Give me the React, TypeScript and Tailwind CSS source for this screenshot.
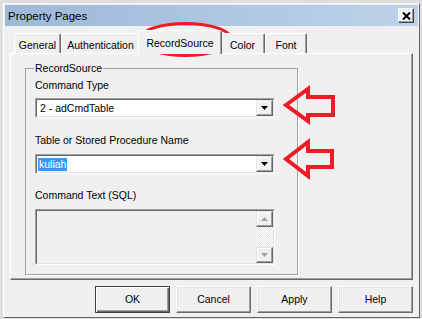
import type { ReactNode } from "react";

const FONT = { fontFamily: '"Liberation Sans", Arial, sans-serif' };

function Sunken({ className, children }: { className: string; children: ReactNode }) {
  return (
    <div className={`border border-t-[#a0a0a0] border-l-[#a0a0a0] border-r-white border-b-white ${className}`}>
      <div className="flex h-full w-full border border-t-[#696969] border-l-[#696969] border-r-[#e3e3e3] border-b-[#e3e3e3]">
        {children}
      </div>
    </div>
  );
}

function SmallButton({ children }: { children: ReactNode }) {
  return (
    <div className="flex h-[16px] w-[17px] items-center justify-center border border-t-[#e3e3e3] border-l-[#e3e3e3] border-r-[#696969] border-b-[#696969] bg-[#f0f0f0] shadow-[inset_-1px_-1px_0_#a0a0a0,inset_1px_1px_0_#ffffff]">
      {children}
    </div>
  );
}

function DownArrow({ color = "#000" }: { color?: string }) {
  return (
    <svg width="7" height="4" viewBox="0 0 7 4">
      <polygon points="0,0 7,0 3.5,4" fill={color} />
    </svg>
  );
}

function Combo({ children }: { children: ReactNode }) {
  return (
    <Sunken className="h-[20px] w-[240px] bg-white">
      <div className="flex flex-1 items-center pl-[1px] text-[10.5px] leading-[13px] text-black">{children}</div>
      <SmallButton>
        <DownArrow />
      </SmallButton>
    </Sunken>
  );
}

function Tab({ label, width, active }: { label: string; width: number; active?: boolean }) {
  return (
    <div
      style={{ width }}
      className={
        active
          ? "relative z-10 -mx-[2px] flex h-[24px] justify-center rounded-t-[2px] border-l border-t border-r border-l-white border-t-white border-r-[#696969] bg-[#f0f0f0] pt-[6px] text-[10.5px] leading-[13px] shadow-[inset_-1px_0_0_#a0a0a0]"
          : "mb-[1px] flex h-[20px] justify-center rounded-t-[2px] border-l border-t border-r border-l-white border-t-white border-r-[#696969] bg-[#f0f0f0] pt-[5px] text-[10.5px] leading-[13px] shadow-[inset_-1px_0_0_#a0a0a0]"
      }
    >
      {label}
    </div>
  );
}

function PushButton({ label, def }: { label: string; def?: boolean }) {
  return (
    <div
      className={`flex h-[27px] w-[75px] items-center justify-center border bg-[#f0f0f0] text-[10.5px] text-black ${
        def
          ? "border-[#404040] shadow-[inset_1px_1px_0_#ffffff,inset_-1px_-1px_0_#696969,inset_-2px_-2px_0_#a0a0a0]"
          : "border-t-white border-l-white border-r-[#696969] border-b-[#696969] shadow-[inset_-1px_-1px_0_#a0a0a0,inset_1px_1px_0_#e3e3e3]"
      }`}
    >
      {label}
    </div>
  );
}

export default function App() {
  return (
    <div style={FONT} className="relative h-[319px] w-[422px] overflow-hidden bg-[#dedede] pl-[3px] pt-[3px] text-black">
      <div className="flex h-[315px] w-[417px] flex-col border border-t-[#f4f4f4] border-l-white border-r-[#646464] border-b-[#646464] bg-[#f0f0f0]">
        {/* title bar */}
        <div className="mx-[1px] mt-[1px] flex h-[21px] items-center justify-between bg-gradient-to-r from-[#9db9d8] to-[#bcd3ea] pl-[3px] pr-[4px]">
          <span className="text-[11.5px] leading-[14px] text-black">Property Pages</span>
          <div className="flex h-[15px] w-[16px] items-center justify-center border border-t-white border-l-white border-r-[#404040] border-b-[#404040] bg-[#f0f0f0] shadow-[inset_-1px_-1px_0_#a0a0a0]">
            <svg width="9" height="8" viewBox="0 0 9 8">
              <path d="M1 0.5 L8 7.5 M8 0.5 L1 7.5" stroke="#000" strokeWidth="2" />
            </svg>
          </div>
        </div>

        {/* tabs */}
        <div className="relative z-10 ml-[10px] mt-[4px] flex h-[24px] items-end">
          <Tab label="General" width={47} />
          <Tab label="Authentication" width={79} />
          <Tab label="RecordSource" width={84} active />
          <Tab label="Color" width={45} />
          <Tab label="Font" width={42} />
        </div>

        {/* tab panel */}
        <div className="mx-[6px] -mt-[1px] flex h-[227px] flex-col border border-t-white border-l-white border-r-[#696969] border-b-[#696969] shadow-[inset_-1px_-1px_0_#a0a0a0] pl-[14px] pt-[8px]">
          <fieldset className="h-[213px] w-[273px] border border-[#a0a0a0] px-[9px] shadow-[1px_1px_0_#ffffff]">
            <legend className="ml-[-1px] px-[1px] text-[10.5px] leading-[13px]">RecordSource</legend>
            <div className="mt-[4px] text-[10.5px] leading-[13px]">Command Type</div>
            <div className="mt-[6px]">
              <Combo>
                <span className="pl-[2px]">2 - adCmdTable</span>
              </Combo>
            </div>
            <div className="mt-[16px] text-[10.5px] leading-[13px]">Table or Stored Procedure Name</div>
            <div className="mt-[7px]">
              <Combo>
                <span className="bg-[#3399ff] px-[1px] text-white">kuliah</span>
              </Combo>
            </div>
            <div className="mt-[15px] text-[10.5px] leading-[13px]">Command Text (SQL)</div>
            <div className="mt-[7px]">
              <Sunken className="h-[56px] w-[240px] bg-[#f0f0f0]">
                <div className="flex-1" />
                <div className="flex w-[17px] flex-col">
                  <SmallButton>
                    <svg width="7" height="4" viewBox="0 0 7 4">
                      <polygon points="0,4 7,4 3.5,0" fill="#a0a0a0" />
                    </svg>
                  </SmallButton>
                  <div className="flex-1 bg-[repeating-conic-gradient(#ffffff_0_25%,#e6e6e6_0_50%)] bg-[length:2px_2px]" />
                  <SmallButton>
                    <DownArrow color="#a0a0a0" />
                  </SmallButton>
                </div>
              </Sunken>
            </div>
          </fieldset>
        </div>

        {/* buttons */}
        <div className="mr-[6px] mt-[6px] flex justify-end gap-[6px]">
          <PushButton label="OK" def />
          <PushButton label="Cancel" />
          <PushButton label="Apply" />
          <PushButton label="Help" />
        </div>
      </div>

      {/* red annotations */}
      <svg className="pointer-events-none absolute left-0 top-0" width="422" height="319" viewBox="0 0 422 319">
        <ellipse cx="185.5" cy="39.5" rx="46" ry="16" fill="none" stroke="#ed1c24" strokeWidth="3" />
        <text x="211" y="39" fill="#e8354a" fontSize="11" fontWeight="bold" fontFamily="Liberation Sans, Arial, sans-serif">
          1
        </text>
        <polygon
          points="286,105 308,89 308,97 333,97 333,115 308,115 308,121"
          fill="none"
          stroke="#ed1c24"
          strokeWidth="4"
          strokeLinejoin="miter"
        />
        <polygon
          points="286,159 308,142 308,151 332,151 332,167 308,167 308,176"
          fill="none"
          stroke="#ed1c24"
          strokeWidth="4"
          strokeLinejoin="miter"
        />
      </svg>
    </div>
  );
}
